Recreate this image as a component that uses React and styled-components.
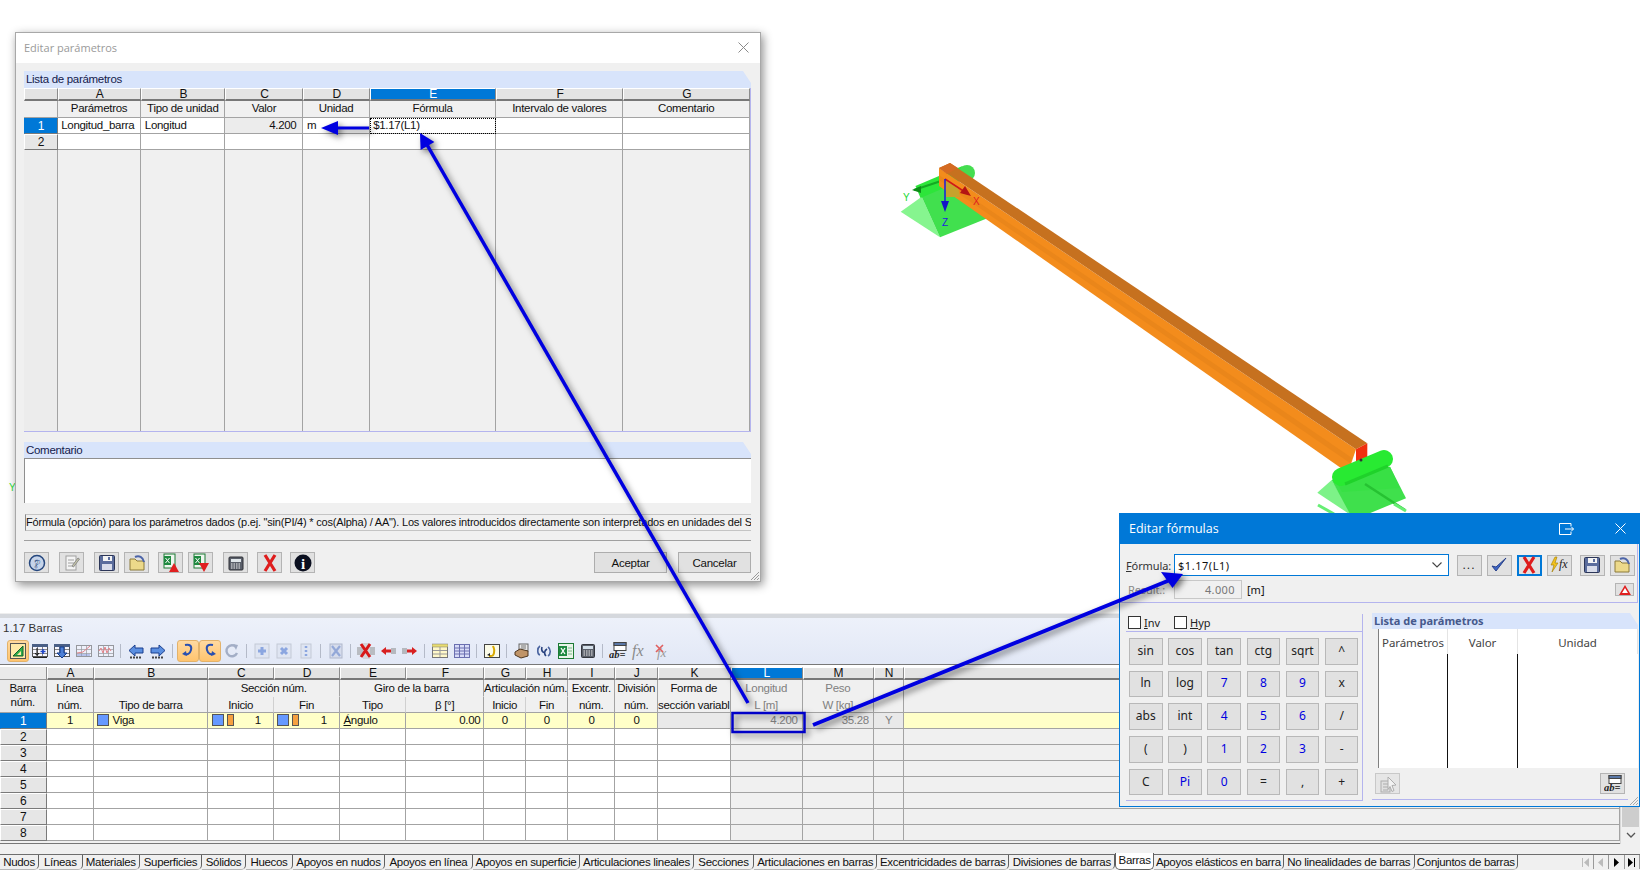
import React from 'react';
import styled, { createGlobalStyle } from 'styled-components';

const GlobalStyle = createGlobalStyle`
  html, body { margin: 0; padding: 0; background: #fff; }
  body { font: 11.5px "Liberation Sans", Arial, sans-serif; letter-spacing: -.3px; color: #111; }
  * { box-sizing: border-box; }
`;

const LINE = '#a3a3a3';
const LAV = '#b4b4ee';

const Page = styled.div`
  position: relative; width: 1640px; height: 870px; overflow: hidden;
  display: flex; flex-direction: column; background: #fff;
`;
const Viewport = styled.div`position: relative; height: 613px; flex: none; background: #fff;`;
const SceneSvg = styled.svg`position: absolute; inset: 0; width: 100%; height: 100%;`;

const Overlay = styled.svg`
  position: absolute; left: 0; top: 0; width: 1640px; height: 870px; pointer-events: none;
  filter: drop-shadow(3px 3px 3px rgba(0,0,0,.55));
`;

/* ---------- dialog 1 ---------- */
const ParamWindow = styled.section`
  position: absolute; left: 15px; top: 32px; width: 746px; height: 550px;
  background: #f0f0f0; border: 1px solid #a8a8a8; box-shadow: 2px 3px 9px rgba(0,0,0,.45);
  display: flex; flex-direction: column;
`;
const ParamTitle = styled.header`
  height: 30px; flex: none; background: #fff; display: flex; align-items: center; justify-content: space-between;
  padding: 0 11px 2px 8px; font: 11px "Open Sans", sans-serif; letter-spacing: 0; color: #9a9a9a;
`;
const ParamBody = styled.div`flex: 1; display: flex; flex-direction: column; padding: 8px 9px 0 8px; position: relative;`;
const GroupHead = styled.div`
  height: ${p => p.$h || 17}px; flex: none; margin-top: ${p => p.$mt || 0}px; background: #d8e4fb; color: #14204c; padding: 2px 0 0 2px; line-height: 13px;
  clip-path: polygon(0 0, calc(100% - 8px) 0, 100% 12px, 100% 100%, 0 100%);
`;
const ParamGrid = styled.div`
  height: 344px; flex: none; display: grid; background: #f0f0f0;
  grid-template-columns: 33.7px 83.6px 84.1px 78.1px 66.2px 126.8px 126.9px 1fr;
  grid-template-rows: 13px 17px 16px 16px 1fr;
  border-bottom: 1px solid ${LAV}; border-right: 1px solid ${LAV};
`;
const Letter = styled.div`
  display: flex; align-items: center; justify-content: center; line-height: 12px; font-size: 12px;
  background: ${p => p.$sel ? '#0078d7' : '#e3e3e3'}; color: ${p => p.$sel ? '#fff' : '#111'};
  border-top: 1px solid #fff; border-left: 1px solid #fff;
  border-right: 1px solid #8c8c8c; border-bottom: 2px solid #777;
`;
const ColHead = styled.div`
  display: flex; align-items: center; justify-content: center; border-right: 1px solid ${LINE}; border-bottom: 1px solid ${LINE};
  background: #f0f0f0; padding-bottom: 3px;
`;
const RowNum = styled.div`
  display: flex; align-items: center; justify-content: center; font-size: 12px; padding-bottom: 1px;
  background: ${p => p.$sel ? '#0078d7' : '#e6e6e6'}; color: ${p => p.$sel ? '#fff' : '#111'};
  border-top: 1px solid ${p => p.$sel ? '#0078d7' : '#fff'}; border-left: 1px solid ${p => p.$sel ? '#0078d7' : '#fff'};
  border-right: 1px solid #7a7a7a; border-bottom: 1px solid #7a7a7a;
`;
const Cell = styled.div`
  display: flex; align-items: center; gap: ${p => p.$gap || 0}px; white-space: nowrap; overflow: hidden;
  justify-content: ${p => p.$align === 'right' ? 'flex-end' : p.$align === 'center' ? 'center' : 'flex-start'};
  padding: 0 ${p => p.$pr || 3}px 1px 3.5px; background: ${p => p.$bg || '#fff'}; color: ${p => p.$muted ? '#808080' : '#111'};
  border-right: 1px solid ${LINE}; border-bottom: 1px solid ${LINE};
  ${p => p.$dotted ? 'outline: 1px dotted #000; outline-offset: -1px;' : ''}
`;
const Filler = styled.div`background: ${p => p.$dark ? '#ececec' : '#f0f0f0'}; border-right: 1px solid ${LINE};`;
const CommentBox = styled.div`
  height: 45px; flex: none; background: #fff; border-top: 1px solid #8f8f8f; border-left: 1px solid #8f8f8f;
`;
const StatusText = styled.div`
  height: 17px; flex: none; margin: 11px 0 0 1px; border: 1px solid #c4c4c4; border-left-color: #888; border-right: none;
  white-space: nowrap; overflow: hidden; font-size: 11px; letter-spacing: -.2px; line-height: 14px;
`;
const Rule = styled.div`height: 1px; flex: none; background: #a0a0a0; margin-top: 9px;`;
const DialogActions = styled.div`height: 21px; flex: none; margin-top: 11px; display: flex; align-items: center;`;
const IconBtn = styled.button`
  width: ${p => p.$w || 25}px; height: ${p => p.$h || 21}px; flex: none; margin: 0 0 0 ${p => p.$ml || 0}px; padding: 0;
  display: flex; align-items: center; justify-content: center;
  background: #e1e1e1; border: ${p => p.$focus ? '2px solid #0078d7' : '1px solid #b4b4b4'};
  opacity: ${p => p.$dim ? .65 : 1};
`;
const Ellipsis = styled.span`font: 12px "Liberation Sans", sans-serif; letter-spacing: 1px; color: #222;`;
const TextBtn = styled.button`
  width: 73px; height: 21px; margin-left: ${p => p.$ml || 0}px; padding: 0; background: #e1e1e1; border: 1px solid #adadad;
  font: 11.5px "Liberation Sans", sans-serif; letter-spacing: -.24px; color: #111;
`;
const Grip = styled.svg`position: absolute; right: 0; bottom: 0; width: 12px; height: 12px;`;

/* ---------- bottom panel ---------- */
const PanelSash = styled.div`height: 5px; flex: none; background: #d5d8dd; border-top: 1px solid #eee;`;
const PanelHead = styled.div`
  height: 47px; flex: none; background: linear-gradient(#edf1fa, #e2e8f6);
  border-bottom: 1px solid #787878; padding: 3px 0 0 3px;
`;
const PanelTitle = styled.div`font: 11.5px "Liberation Sans", sans-serif; color: #333; line-height: 15px; letter-spacing: 0;`;
const Toolbar = styled.div`display: flex; align-items: center; height: 24px; margin: 3px 0 0 3.5px;`;
const ToolBtn = styled.div`
  width: 22px; height: 22px; flex: none; display: flex; align-items: center; justify-content: center;
  ${p => p.$active ? 'background: linear-gradient(#ffd9a0, #ffc46e); border: 1px solid #e3b26a; border-radius: 3px;' : ''}
`;
const ToolSep = styled.div`
  width: 8px; height: 18px; flex: none; position: relative;
  &::after { content: ''; position: absolute; left: 3px; top: 2px; bottom: 2px; width: 1px; background: #b4bac8; }
`;
const TableArea = styled.div`height: 177px; flex: none; margin-top: 2px; display: flex; background: #f0f0f0;`;
const BarsGrid = styled.div`
  flex: 1; display: grid;
  grid-template-columns: 46.6px 47.4px 114.4px 65.6px 66px 66px 78.4px 41.6px 42px 47.5px 42.5px 72.7px 72px 71.3px 30px 1fr;
  grid-template-rows: 13px 16.5px 16.5px repeat(8, 16px);
  border-bottom: 1px solid #777;
`;
const Corner = styled.div`background: #eaeaea; border-right: 1px solid #8c8c8c; border-bottom: 1px solid #999;`;
const Head = styled.div`
  grid-column: ${p => p.$c} / span ${p => p.$cs || 1}; grid-row: ${p => p.$r} / span ${p => p.$rs || 1};
  display: flex; flex-direction: column; align-items: center; justify-content: flex-start; white-space: nowrap; overflow: hidden;
  padding-top: 1px;
  background: ${p => p.$dark ? '#eaeaea' : '#f0f0f0'}; color: ${p => p.$muted ? '#808080' : '#111'};
  border-right: 1px solid ${p => p.$soft ? '#d0d0d0' : LINE}; border-bottom: 1px solid ${p => p.$open ? 'transparent' : LINE};
`;
const HeadLine = styled.div`height: ${p => p.$tight ? 14 : 16.5}px; line-height: 14px; flex: none;`;
const Swatch = styled.span`
  flex: none; width: ${p => p.$w || 12}px; height: 12px; background: ${p => p.$c}; border: 1px solid #555;
`;
const SpacedValue = styled.span`margin-left: auto; padding-right: ${p => p.$pr || 0}px;`;
const Underlined = styled.u`text-decoration: underline;`;
const ScrollTrack = styled.div`
  width: 20px; flex: none; background: #f0f0f0; display: flex; flex-direction: column; justify-content: flex-end; border-left: 1px solid #d8d8d8;
`;
const ScrollThumb = styled.div`height: 40px; background: #cdcdcd; margin: 0 1px;`;
const ScrollBtn = styled.div`height: 17px; display: flex; align-items: center; justify-content: center;`;
const TabGap = styled.div`height: 10px; flex: none; background: #f0f0f0;`;
const TabStrip = styled.div`
  height: 18px; flex: none; display: flex; background: #f0f0f0; border-top: 1px solid #6e6e6e; position: relative;
`;
const Tab = styled.div`
  width: ${p => p.$w}px; flex: none; text-align: center; line-height: 15px; white-space: nowrap;
  margin-top: ${p => p.$active ? -2 : 0}px; height: ${p => p.$active ? 17 : 15}px;
  background: ${p => p.$active ? '#fff' : 'transparent'};
  border-right: 1px solid #606060; border-bottom: 1px solid ${p => p.$active ? '#606060' : '#b8b8b8'}; border-bottom-right-radius: 5px;
  ${p => p.$active ? 'border-left: 1px solid #606060; border-bottom-left-radius: 5px;' : ''}
`;
const TabNav = styled.div`margin-left: auto; display: flex; align-items: center; padding: 0 0 3px 0;`;
const NavBtn = styled.div`
  width: 15.5px; height: 14px; display: flex; align-items: center; justify-content: center;
  border-right: 1px solid #9a9a9a;
`;

/* ---------- formula dialog ---------- */
const FormulaWindow = styled.section`
  position: absolute; left: 1119px; top: 513px; width: 521px; height: 294px;
  background: #f0f0f0; border: 1px solid #0078d7; border-top: none; display: flex; flex-direction: column;
`;
const FormulaTitle = styled.header`
  height: 31px; flex: none; background: #0078d7; color: #fff; display: flex; align-items: center;
  font: 12.5px "Open Sans", sans-serif; letter-spacing: 0; padding: 0 5px 0 9px;
`;
const TitleGlyph = styled.span`margin-left: ${p => p.$ml}px; display: flex;`;
const FormulaTop = styled.div`
  height: 59px; flex: none; padding: 10px 0 0 6px; margin-right: 1px;
  border-right: 1px solid ${LAV}; border-bottom: 1px solid ${LAV};
`;
const FormRow = styled.div`display: flex; align-items: center; height: ${p => p.$h}px; margin-top: ${p => p.$mt || 0}px;`;
const FieldLabel = styled.label`
  width: 48px; flex: none; font: 11px "Noto Sans", sans-serif; letter-spacing: -.1px; color: ${p => p.$muted ? '#8a8a8a' : '#333'}; padding-left: ${p => p.$pl || 0}px;
`;
const Combo = styled.div`
  width: 275px; height: 22px; flex: none; background: #fff; border: 1px solid #0078d7; display: flex; align-items: center;
  justify-content: space-between; padding: 0 5px 0 3px; font: 11px "Noto Sans", sans-serif; letter-spacing: .55px;
`;
const ReadOnly = styled.div`
  width: 68px; height: 19px; flex: none; background: #f0f0f0; border: 1px solid #c8c8c8; text-align: right; padding-right: 6px;
  color: #777; font: 11px/17px "Noto Sans", sans-serif; letter-spacing: .4px;
`;
const Unit = styled.span`margin-left: 5px; width: 20px; flex: none; font: 11px "Noto Sans", sans-serif; letter-spacing: 0;`;
const FormulaLower = styled.div`flex: 1; display: flex; position: relative;`;
const CalcColumn = styled.div`width: 243px; flex: none; padding-left: 6px;`;
const CalcInner = styled.div`
  margin-top: 11px; height: 187px; border-right: 1px solid ${LAV}; border-bottom: 1px solid ${LAV};
`;
const ToggleRow = styled.div`
  height: 18px; display: flex; align-items: center; padding-left: 2px; border-bottom: 1px solid ${LAV};
  font: 11px "Noto Sans", sans-serif; letter-spacing: 0; color: #222;
`;
const Toggle = styled.span`display: flex; align-items: center; gap: 3px; width: 46px;`;
const CheckSquare = styled.span`width: 13px; height: 13px; background: #fff; border: 1px solid #333;`;
const CalcGrid = styled.div`
  display: grid; grid-template-columns: repeat(6, 33.5px); column-gap: 5.7px;
  grid-auto-rows: 26.5px; row-gap: 6.2px; margin: 6px 0 0 3px;
`;
const CalcKey = styled.button`
  padding: 0 0 2px; background: #e1e1e1; border: 1px solid #b8b8b8; font: 12px "Noto Sans", sans-serif;
  color: ${p => p.$blue ? '#0000e0' : '#222'};
`;
const ListColumn = styled.div`flex: 1; display: flex; flex-direction: column; padding: 10px 1px 0 9px; min-width: 0;`;
const ListHead = styled(GroupHead)`
  color: #46598c; font: 700 11px "Noto Sans", sans-serif; letter-spacing: 0; padding: 0 0 0 2px; line-height: 15px;
`;
const ListTable = styled.div`
  height: 139px; flex: none; margin-left: 6px; background: #fff; border-left: 1px solid #808080;
  display: grid; grid-template-columns: 69px 70px 1fr; grid-template-rows: 25px 1fr;
`;
const ListHeadCell = styled.div`
  display: flex; justify-content: center; padding-top: 6px; border-right: 1px solid #e4e4e4; font: 11.5px "Noto Sans", sans-serif; letter-spacing: -.1px; color: #444;
`;
const ListCol = styled.div`border-right: ${p => p.$end ? 'none' : '1px solid #111'};`;
const ListFoot = styled.div`
  height: 32px; flex: none; padding: 5px 3px 0 3px; display: flex; justify-content: space-between; margin-right: 10px;
  border-bottom: 1px solid ${LAV};
`;

/* ---------- icons ---------- */
const Svg = ({ s = 16, h, children }) => <svg width={s} height={h || s} viewBox={`0 0 ${s} ${h || s}`}>{children}</svg>;
const TableBase = ({ y = 2, fill = '#f6f6ff', line = '#555' }) => (
  <g fill="none" stroke={line}>
    <rect x=".5" y={y + .5} width="15" height={13 - y} fill={fill} />
    <path d={`M.5 ${y + 4.5}h15M.5 ${y + 8.5}h15M5.5 ${y}v11M10.5 ${y}v11`} strokeOpacity=".7" />
  </g>
);
const I = {
  ruler: <Svg><rect x=".5" y=".5" width="15" height="15" fill="#ffe9a8" stroke="#555" /><path d="M3 13L13 3v10z" fill="#2fae4a" stroke="#14602a" /><path d="M7 12l4-4v4z" fill="#ffe9a8" /></Svg>,
  tblPlus: <Svg><TableBase /><rect x="0" y="1" width="16" height="3" fill="#4a5f86" /><path d="M5 5v7M3 10l2 2.5L7 10" stroke="#111" fill="none" /><path d="M11 6v5M8.500 8.500h5" stroke="#1f45c8" strokeWidth="1.6" /><path d="M1 14.500h14" stroke="#222" /></Svg>,
  tblDown: <Svg><TableBase /><rect x="0" y="1" width="16" height="3" fill="#4a5f86" /><path d="M6 4h4v6h3l-5 5-5-5h3z" fill="#4d7fd6" stroke="#123a8a" /></Svg>,
  chart1: <Svg><g opacity=".55"><TableBase /><path d="M1 10l6-1 7-6" stroke="#e03030" fill="none" /><path d="M1 12h13" stroke="#3050c0" /></g></Svg>,
  chart2: <Svg><g opacity=".55"><TableBase /><path d="M1 8l2-3 2 5 2-6 2 6 2-5 2 3" stroke="#e03030" fill="none" /></g></Svg>,
  arrL: <Svg><path d="M7 2v3h8v5H7v3L1 7.500z" fill="#5b8fe0" stroke="#1b3f8f" /><path d="M2 14.500h12" stroke="#444" strokeDasharray="2 1" strokeWidth="2" /></Svg>,
  arrR: <Svg><path d="M9 2v3H1v5h8v3l6-5.500z" fill="#5b8fe0" stroke="#1b3f8f" /><path d="M2 14.500h12" stroke="#444" strokeDasharray="2 1" strokeWidth="2" /></Svg>,
  hookL: <Svg><path d="M5 2c5-1 7 1 6 5s-4 5-7 4" fill="none" stroke="#284fb0" strokeWidth="2" /><path d="M6 8l-4 3 5 2z" fill="#284fb0" /></Svg>,
  hookR: <Svg><path d="M11 2C6 1 4 3 5 7s4 5 7 4" fill="none" stroke="#284fb0" strokeWidth="2" /><path d="M10 8l4 3-5 2z" fill="#284fb0" /></Svg>,
  cycle: <Svg><path d="M12 4a5.500 5.500 0 1 0 1 6" fill="none" stroke="#a3aec6" strokeWidth="2.400" /><path d="M9 1l5 1-2 5z" fill="#a3aec6" /></Svg>,
  nodePlus: <Svg><rect x="1" y="1" width="14" height="14" fill="#dfe5f2" stroke="#c3c9d6" /><path d="M8 4v8M4 8h8" stroke="#8ba6e0" strokeWidth="3" /></Svg>,
  nodeX: <Svg><rect x="1" y="1" width="14" height="14" fill="#dfe5f2" stroke="#c3c9d6" /><path d="M5 5l6 6M11 5l-6 6" stroke="#8ba6e0" strokeWidth="3" /></Svg>,
  nodeDots: <Svg><rect x="3" y="1" width="10" height="14" fill="#dfe5f2" stroke="#c3c9d6" /><path d="M8 3v2M8 7v2M8 11v2" stroke="#8ba6e0" strokeWidth="2.500" /></Svg>,
  sheetX: <Svg><rect x="2" y="1" width="12" height="14" fill="#d6dcec" stroke="#b0b8cc" /><path d="M4 3l8 10M12 3L4 13" stroke="#93a8d8" strokeWidth="2.200" /></Svg>,
  delRed: <Svg s={18} h={16}><rect x="0" y="4" width="18" height="8" fill="#b9bcc2" /><rect x="6" y="0" width="7" height="16" fill="#d4d6da" /><path d="M4 1l9 13M13 1L4 14" stroke="#d81818" strokeWidth="3" /></Svg>,
  insL: <Svg><path d="M1 8l5-4v2.500h5v3H6V12z" fill="#d82020" /><rect x="11" y="5" width="5" height="6" fill="#b5b8be" /></Svg>,
  insR: <Svg><rect x="0" y="5" width="5" height="6" fill="#b5b8be" /><path d="M15 8l-5-4v2.500H5v3h5V12z" fill="#d82020" /></Svg>,
  tblY: <Svg><rect x=".5" y="1.500" width="15" height="13" fill="#fff8c8" stroke="#777" /><rect x="0" y="1" width="16" height="3" fill="#e8dc70" stroke="#777" strokeWidth=".5" /><path d="M1 7.500h14M1 11h14M8 4v10" stroke="#999" /></Svg>,
  tblB: <Svg><rect x=".5" y="1.500" width="15" height="13" fill="#d8dcf8" stroke="#6a6fb0" /><path d="M1 5h14M1 8h14M1 11h14M5.500 2v12M10.500 2v12" stroke="#6a6fb0" /></Svg>,
  tblNote: <Svg><rect x=".5" y="1.500" width="15" height="13" fill="#fbfbe8" stroke="#444" /><path d="M9 3c1 3 2 3 1 7s-3 3-5 3" stroke="#d8a800" strokeWidth="2" fill="none" /><path d="M3 12l3-2v3z" fill="#222" /></Svg>,
  hand: <Svg><rect x="5" y="1" width="9" height="7" fill="#e8e8e8" stroke="#666" /><path d="M1 9l5-3 8 2v5l-7 2-6-3z" fill="#c09468" stroke="#4e3720" /><path d="M7 3h5M7 5h5" stroke="#777" /></Svg>,
  link: <Svg><path d="M4 3C1 5 1 11 4 12M12 4c3 2 3 7 0 9" fill="none" stroke="#4a64a0" strokeWidth="1.600" /><path d="M6 4c-1 3 0 5 3 6M11 6c-3 2-3 5-1 7" fill="none" stroke="#27417e" strokeWidth="1.600" /></Svg>,
  excel: <Svg><rect x=".5" y=".5" width="15" height="15" fill="#e9f4e9" stroke="#1d7a35" /><rect x="1" y="3" width="8" height="10" fill="#1f8a40" /><path d="M3 5l4 6M7 5l-4 6" stroke="#fff" strokeWidth="1.300" /><path d="M10 5h4M10 8h4M10 11h4" stroke="#7ab88a" /></Svg>,
  calc: <Svg><rect x="1.500" y="1.500" width="13" height="13" rx="1" fill="#5a5f6a" stroke="#33363d" /><rect x="3" y="3" width="10" height="3" fill="#d4e0ea" /><path d="M3.500 8h9M3.500 10h9M3.500 12h9" stroke="#e8e8e8" strokeDasharray="1.500 1" /></Svg>,
  abEq: <Svg s={18} h={18}><rect x="5" y=".5" width="12" height="8" fill="#fff" stroke="#444" /><rect x="5" y=".5" width="12" height="3" fill="#5a78a8" stroke="#444" /><text x="0" y="16" fontFamily="Liberation Serif" fontStyle="italic" fontWeight="700" fontSize="10.500" fill="#222" letterSpacing="0">ab=</text></Svg>,
  fx: <Svg s={18} h={18}><text x="1" y="14" fontFamily="Liberation Serif" fontStyle="italic" fontSize="16" fill="#8a8a8a" letterSpacing="0">fx</text></Svg>,
  fxOff: <Svg s={18} h={18}><text x="4" y="15" fontFamily="Liberation Serif" fontStyle="italic" fontSize="13" fill="#9a9a9a" letterSpacing="0">fx</text><path d="M3 3l7 7M10 3l-7 7" stroke="#e06060" strokeWidth="1.600" /></Svg>,
  help: <Svg s={18} h={18}><circle cx="9" cy="9" r="7.500" fill="#c6d4ea" stroke="#25477e" strokeWidth="1.500" /><text x="9" y="13.500" textAnchor="middle" fontFamily="Liberation Serif" fontStyle="italic" fontWeight="700" fontSize="13" fill="#fff" stroke="#25477e" strokeWidth=".5">?</text></Svg>,
  note: <Svg s={18} h={18}><rect x="3" y="2" width="10" height="14" fill="#f4f4f4" stroke="#a0a0a0" /><path d="M5 6h6M5 9h6M5 12h4" stroke="#a0a0a0" /><path d="M9 12l6-8 1.500 1-6 8z" fill="#c8c8a8" stroke="#8c8c8c" /></Svg>,
  save: <Svg s={18} h={18}><rect x="1.500" y="1.500" width="15" height="15" rx="1" fill="#5a6c9c" stroke="#2c3658" /><rect x="5" y="2" width="9" height="5" fill="#f4f4f4" /><rect x="10" y="3" width="2" height="3" fill="#5a6c9c" /><rect x="4" y="10" width="10" height="6" fill="#d8dcea" /></Svg>,
  open: <Svg s={18} h={18}><path d="M2 5h5l2 2h7v9H2z" fill="#ecd98a" stroke="#8c7a3a" /><path d="M7 3c4-2 8 0 9 5" fill="none" stroke="#4c64a8" strokeWidth="2" /></Svg>,
  xlUp: <Svg s={18} h={20}><rect x="2" y="1" width="11" height="14" fill="#eef6ee" stroke="#1d7a35" /><rect x="2" y="3" width="7" height="9" fill="#1f8a40" /><path d="M3.500 5l4 5M7.500 5l-4 5" stroke="#fff" /><path d="M12 10l5 9H7z" fill="#e02020" /></Svg>,
  xlDown: <Svg s={18} h={20}><rect x="2" y="1" width="11" height="14" fill="#eef6ee" stroke="#1d7a35" /><rect x="2" y="3" width="7" height="9" fill="#1f8a40" /><path d="M3.500 5l4 5M7.500 5l-4 5" stroke="#fff" /><path d="M12 19l5-9H7z" fill="#e02020" /></Svg>,
  calcBig: <Svg s={18} h={18}><rect x="2" y="3" width="14" height="13" rx="1" fill="#5a5f6a" stroke="#2e3036" /><rect x="4" y="5" width="10" height="3" fill="#e0e6ea" /><path d="M4 10h10M4 12h10M4 14h10" stroke="#eee" strokeDasharray="1.500 1" /></Svg>,
  redX: <Svg s={18} h={20}><path d="M4 2l10 16M14 2L4 18" stroke="#de1c1c" strokeWidth="3.200" /></Svg>,
  info: <Svg s={18} h={18}><circle cx="9" cy="9" r="8.500" fill="#0b1020" /><text x="9" y="14.500" textAnchor="middle" fontFamily="Liberation Serif" fontWeight="700" fontSize="15" fill="#fff">i</text></Svg>,
  check: <Svg s={20} h={18}><path d="M3 10l4 5L17 2 7 11z" fill="#3f66c8" stroke="#28418a" strokeWidth="1" /></Svg>,
  fxBolt: <Svg s={20} h={18}><path d="M6 1L2 9h3l-2 7 6-9H6l2-6z" fill="#f2c21e" stroke="#a07a00" strokeWidth=".6" /><text x="10" y="12" fontFamily="Liberation Serif" fontStyle="italic" fontSize="12" fill="#222" letterSpacing="0">fx</text></Svg>,
  warn: <Svg s={12} h={10}><path d="M6 0l6 10H0z" fill="#e02020" /><path d="M6 3l3 5H3z" fill="#fff" /></Svg>,
  listPick: <Svg s={20} h={20}><rect x="3" y="7" width="9" height="11" fill="#d8d8d8" stroke="#8a8a8a" /><path d="M5 10h5M5 13h5M5 16h5" stroke="#8a8a8a" /><path d="M10 3l8 8-4 .5 2 5-2 1-2-5-2 3z" fill="#f4f4f4" stroke="#8a8a8a" /></Svg>,
  chevron: <svg width="12" height="8" viewBox="0 0 12 8"><path d="M1.500 1.500L6 6l4.500-4.500" fill="none" stroke="#444" strokeWidth="1.100" /></svg>,
  popOut: <svg width="15" height="12" viewBox="0 0 15 12"><path d="M12 .5H.5v11H12M12 .5v2.500M12 11.500V9M6 6h8.500M12 3.500L14.500 6 12 8.500" fill="none" stroke="#fff" /></svg>,
  closeW: <svg width="11" height="11" viewBox="0 0 11 11"><path d="M.5.5l10 10M10.500.5l-10 10" stroke="#fff" /></svg>,
  closeG: <svg width="11" height="11" viewBox="0 0 11 11"><path d="M.5.5l10 10M10.500.5l-10 10" stroke="#8a8a8a" /></svg>,
  first: <svg width="9" height="9" viewBox="0 0 9 9"><path d="M1.500 0v9" stroke="#bbb" /><path d="M8 0v9L3 4.500z" fill="#bbb" /></svg>,
  prev: <svg width="9" height="9" viewBox="0 0 9 9"><path d="M7 0v9L2 4.500z" fill="#bbb" /></svg>,
  next: <svg width="9" height="9" viewBox="0 0 9 9"><path d="M2 0v9l5-4.500z" fill="#000" /></svg>,
  last: <svg width="9" height="9" viewBox="0 0 9 9"><path d="M1 0v9l5-4.500z" fill="#000" /><path d="M7.500 0v9" stroke="#000" /></svg>,
};

const Scene = () => (
  <SceneSvg viewBox="0 0 1640 613">
    {/* left support */}
    <polygon points="900.700,211.700 921.700,196.700 940,237.300" fill="#86f58f" />
    <polygon points="921.700,196.700 943,180 988,218 940,237.300" fill="#41e04e" />
    <line x1="918" y1="192" x2="965" y2="172" stroke="#2de53a" strokeWidth="13" />
    <circle cx="967" cy="173" r="8" fill="#45dd50" />
    <line x1="914" y1="190" x2="944" y2="180" stroke="#15a822" strokeWidth="2" />
    <polygon points="912,190 921,186 921,193" fill="#0e8c18" />
    {/* beam */}
    <polygon points="939,168 1356,449.300 1348,473 939,186" fill="#f38c1c" />
    <polygon points="939,175 1352,458 1350,463 939,180" fill="#ea861a" />
    <polygon points="939,168 950,163 1367.300,443.300 1356,449.300" fill="#c6711f" />
    <polygon points="939,168 950,163 958,168 947,174" fill="#d46a22" />
    <polygon points="945,180 958,187 960,197 946,197" fill="#c6a22c" />
    <polygon points="1356,449.300 1367.300,443.300 1367.300,462 1356,466" fill="#f2300f" />
    {/* local axes */}
    <line x1="945" y1="179" x2="968" y2="194" stroke="#d01818" strokeWidth="1.500" />
    <polygon points="971,196 960,193 965,186" fill="#b41414" />
    <line x1="945" y1="179" x2="945" y2="203" stroke="#1a1ae0" strokeWidth="1.500" />
    <polygon points="945,212 941,201 949,201" fill="#1414c8" />
    <text x="903" y="201" fontFamily="Liberation Sans" fontSize="10" fill="#20d830">Y</text>
    <text x="973" y="205" fontFamily="Liberation Sans" fontSize="10" fill="#e02020">X</text>
    <text x="942" y="226" fontFamily="Liberation Sans" fontSize="10" fill="#2020e0">Z</text>
    <text x="9" y="491" fontFamily="Liberation Sans" fontSize="10" fill="#30e040">Y</text>
    {/* right support */}
    <polygon points="1317.300,492.700 1331.700,480 1353.300,516.700" fill="#7df288" />
    <polygon points="1331.700,480 1390,466.700 1406,498.300 1353.300,520" fill="#3fe04c" />
    <polygon points="1335,479 1390,466.700 1400,488 1342,492" fill="#38e045" />
    <line x1="1341" y1="477" x2="1384" y2="459" stroke="#28ea32" strokeWidth="18" strokeLinecap="round" />
    <line x1="1345" y1="484" x2="1388" y2="466" stroke="#1fd22a" strokeWidth="3" />
    <line x1="1365" y1="484" x2="1405" y2="510" stroke="#26c232" strokeWidth="2.500" />
    <line x1="1318" y1="505" x2="1334" y2="514" stroke="#67ee74" strokeWidth="3" />
    <line x1="1394" y1="504" x2="1406" y2="511" stroke="#67ee74" strokeWidth="3" />
    <circle cx="1361" cy="460" r="1.500" fill="#333" />
  </SceneSvg>
);

const paramLetters = ['A', 'B', 'C', 'D', 'E', 'F', 'G'];
const paramHeads = ['Parámetros', 'Tipo de unidad', 'Valor', 'Unidad', 'Fórmula', 'Intervalo de valores', 'Comentario'];
const actions = [['help', 0], ['note', 10, true], ['save', 10], ['open', 5], ['xlUp', 9], ['xlDown', 5], ['calcBig', 10], ['redX', 9], ['info', 8]];

const ParamDialog = () => (
  <ParamWindow>
    <ParamTitle>Editar parámetros {I.closeG}</ParamTitle>
    <ParamBody>
      <GroupHead>Lista de parámetros</GroupHead>
      <ParamGrid>
        <Letter />
        {paramLetters.map(l => <Letter key={l} $sel={l === 'E'}>{l}</Letter>)}
        <ColHead />
        {paramHeads.map(h => <ColHead key={h}>{h}</ColHead>)}
        <RowNum $sel>1</RowNum>
        <Cell>Longitud_barra</Cell>
        <Cell>Longitud</Cell>
        <Cell $align="right" $bg="#ececec" $pr={6}>4.200</Cell>
        <Cell>m</Cell>
        <Cell $dotted>$1.17(L1)</Cell>
        <Cell /><Cell />
        <RowNum>2</RowNum>
        {paramLetters.map(l => <Cell key={l} />)}
        <Filler $dark />
        {paramLetters.map(l => <Filler key={l} />)}
      </ParamGrid>
      <GroupHead $h={16} $mt={10}>Comentario</GroupHead>
      <CommentBox />
      <StatusText>Fórmula (opción) para los parámetros dados (p.ej. "sin(PI/4) * cos(Alpha) / AA"). Los valores introducidos directamente son interpretados en unidades del S</StatusText>
      <Rule />
      <DialogActions>
        {actions.map(([k, ml, dim]) => <IconBtn key={k} $ml={ml}>{I[k]}</IconBtn>)}
        <TextBtn $ml={279}>Aceptar</TextBtn>
        <TextBtn $ml={11}>Cancelar</TextBtn>
      </DialogActions>
      <Grip viewBox="0 0 12 12"><path d="M11 3L3 11M11 6l-5 5M11 9l-2 2" stroke="#999" /></Grip>
    </ParamBody>
  </ParamWindow>
);

const tools = [
  ['ruler', 1], ['tblPlus'], ['tblDown'], ['chart1'], ['chart2'], 0,
  ['arrL'], ['arrR'], 0,
  ['hookL', 1], ['hookR', 1], ['cycle'], 0,
  ['nodePlus'], ['nodeX'], ['nodeDots'], 0,
  ['sheetX'], 0,
  ['delRed'], ['insL'], ['insR'], 0,
  ['tblY'], ['tblB'], 0,
  ['tblNote'], 0,
  ['hand'], ['link'], ['excel'], ['calc'], 0,
  ['abEq'], ['fx'], ['fxOff'],
];

const barLetters = 'ABCDEFGHIJKLMN'.split('');
const heads = [
  { c: 1, r: 2, rs: 2, dark: 1, tight: 1, l: ['Barra', 'núm.'] },
  { c: 2, r: 2, rs: 2, l: ['Línea', 'núm.'] },
  { c: 3, r: 2, rs: 2, l: ['', 'Tipo de barra'] },
  { c: 4, cs: 2, r: 2, open: 1, l: ['Sección núm.'] },
  { c: 4, r: 3, soft: 1, l: ['Inicio'] },
  { c: 5, r: 3, l: ['Fin'] },
  { c: 6, cs: 2, r: 2, open: 1, l: ['Giro de la barra'] },
  { c: 6, r: 3, soft: 1, l: ['Tipo'] },
  { c: 7, r: 3, l: ['β [°]'] },
  { c: 8, cs: 2, r: 2, open: 1, l: ['Articulación núm.'] },
  { c: 8, r: 3, soft: 1, l: ['Inicio'] },
  { c: 9, r: 3, l: ['Fin'] },
  { c: 10, r: 2, rs: 2, l: ['Excentr.', 'núm.'] },
  { c: 11, r: 2, rs: 2, l: ['División', 'núm.'] },
  { c: 12, r: 2, rs: 2, l: ['Forma de', 'sección variabl'] },
  { c: 13, r: 2, rs: 2, muted: 1, l: ['Longitud', 'L [m]'] },
  { c: 14, r: 2, rs: 2, muted: 1, l: ['Peso', 'W [kg]'] },
  { c: 15, r: 2, rs: 2, l: [] },
  { c: 16, r: 2, rs: 2, l: [] },
];
const Y = '#ffffc8';
const G = '#e9e9e9';
const tabs = [
  ['Nudos', 39], ['Líneas', 43.6], ['Materiales', 57.4], ['Superficies', 62], ['Sólidos', 44], ['Huecos', 47],
  ['Apoyos en nudos', 92], ['Apoyos en línea', 88], ['Apoyos en superficie', 107], ['Articulaciones lineales', 114],
  ['Secciones', 60], ['Articulaciones en barras', 123.5], ['Excentricidades de barras', 131.5], ['Divisiones de barras', 106.5],
  ['Barras', 38.2], ['Apoyos elásticos en barra', 130.3], ['No linealidades de barras', 130.6], ['Conjuntos de barras', 103.4],
];

const BarsTable = () => (
  <TableArea>
    <BarsGrid>
      <Corner />
      {barLetters.map(l => <Letter key={l} $sel={l === 'L'}>{l}</Letter>)}
      <Letter />
      {heads.map((h, i) => (
        <Head key={i} $c={h.c} $cs={h.cs} $r={h.r} $rs={h.rs} $dark={h.dark} $muted={h.muted} $open={h.open} $soft={h.soft}>
          {h.l.map((t, j) => <HeadLine key={j} $tight={h.tight}>{t}</HeadLine>)}
        </Head>
      ))}
      <RowNum $sel>1</RowNum>
      <Cell $bg={Y} $align="center">1</Cell>
      <Cell $bg={Y} $gap={3}><Swatch $c="#6699ff" />Viga</Cell>
      <Cell $bg={Y} $gap={3}><Swatch $c="#6699ff" /><Swatch $c="#f5a040" $w={7} /><SpacedValue $pr={9}>1</SpacedValue></Cell>
      <Cell $bg={Y} $gap={3}><Swatch $c="#6699ff" /><Swatch $c="#f5a040" $w={7} /><SpacedValue $pr={9}>1</SpacedValue></Cell>
      <Cell $bg={Y}><Underlined>Á</Underlined>ngulo</Cell>
      <Cell $bg={Y} $align="right">0.00</Cell>
      <Cell $bg={Y} $align="center">0</Cell>
      <Cell $bg={Y} $align="center">0</Cell>
      <Cell $bg={Y} $align="center">0</Cell>
      <Cell $bg={Y} $align="center">0</Cell>
      <Cell $bg={G} />
      <Cell $bg={G} $muted $align="right" $pr={4}>4.200</Cell>
      <Cell $bg={G} $muted $align="right" $pr={4}>35.28</Cell>
      <Cell $bg={G} $muted $align="center">Y</Cell>
      <Cell $bg={Y} />
      {[2, 3, 4, 5, 6, 7, 8].map(n => (
        <React.Fragment key={n}>
          <RowNum>{n}</RowNum>
          {barLetters.map((l, i) => <Cell key={l} $bg={i >= 11 ? '#f0f0f0' : '#fff'} />)}
          <Cell $bg="#f0f0f0" />
        </React.Fragment>
      ))}
    </BarsGrid>
    <ScrollTrack>
      <ScrollThumb />
      <ScrollBtn><svg width="10" height="7" viewBox="0 0 10 7"><path d="M1 1l4 4 4-4" fill="none" stroke="#555" strokeWidth="1.300" /></svg></ScrollBtn>
    </ScrollTrack>
  </TableArea>
);

const keys = ['sin', 'cos', 'tan', 'ctg', 'sqrt', '^', 'ln', 'log', '7', '8', '9', 'x', 'abs', 'int', '4', '5', '6', '/', '(', ')', '1', '2', '3', '-', 'C', 'Pi', '0', '=', ',', '+'];
const isBlue = k => /^[0-9]$/.test(k) || k === 'Pi';

const FormulaDialog = () => (
  <FormulaWindow>
    <FormulaTitle>
      Editar fórmulas
      <TitleGlyph $ml={340}>{I.popOut}</TitleGlyph>
      <TitleGlyph $ml={41}>{I.closeW}</TitleGlyph>
    </FormulaTitle>
    <FormulaTop>
      <FormRow $h={22}>
        <FieldLabel><Underlined>F</Underlined>órmula:</FieldLabel>
        <Combo>$1.17(L1){I.chevron}</Combo>
        <IconBtn $ml={7.500}><Ellipsis>...</Ellipsis></IconBtn>
        <IconBtn $ml={5}>{I.check}</IconBtn>
        <IconBtn $ml={5} $focus>{I.redX}</IconBtn>
        <IconBtn $ml={5}>{I.fxBolt}</IconBtn>
        <IconBtn $ml={8}>{I.save}</IconBtn>
        <IconBtn $ml={5}>{I.open}</IconBtn>
      </FormRow>
      <FormRow $h={19} $mt={4}>
        <FieldLabel $muted $pl={2}>Result.:</FieldLabel>
        <ReadOnly>4.000</ReadOnly>
        <Unit>[m]</Unit>
        <IconBtn $ml={348} $w={19} $h={13}>{I.warn}</IconBtn>
      </FormRow>
    </FormulaTop>
    <FormulaLower>
      <CalcColumn>
        <CalcInner>
          <ToggleRow>
            <Toggle><CheckSquare /><span><Underlined>I</Underlined>nv</span></Toggle>
            <Toggle><CheckSquare /><span><Underlined>H</Underlined>yp</span></Toggle>
          </ToggleRow>
          <CalcGrid>
            {keys.map(k => <CalcKey key={k} $blue={isBlue(k)}>{k}</CalcKey>)}
          </CalcGrid>
        </CalcInner>
      </CalcColumn>
      <ListColumn>
        <ListHead $h={16}>Lista de parámetros</ListHead>
        <ListTable>
          <ListHeadCell>Parámetros</ListHeadCell>
          <ListHeadCell>Valor</ListHeadCell>
          <ListHeadCell>Unidad</ListHeadCell>
          <ListCol /><ListCol /><ListCol $end />
        </ListTable>
        <ListFoot>
          <IconBtn $dim>{I.listPick}</IconBtn>
          <IconBtn>{I.abEq}</IconBtn>
        </ListFoot>
      </ListColumn>
      <Grip viewBox="0 0 12 12"><path d="M11 3L3 11M11 6l-5 5M11 9l-2 2" stroke="#aaa" /></Grip>
    </FormulaLower>
  </FormulaWindow>
);

const Annotations = () => (
  <Overlay viewBox="0 0 1640 870">
    <g fill="#0000e0" stroke="none">
      <line x1="369" y1="128" x2="336" y2="128" stroke="#0000e0" strokeWidth="3" />
      <polygon points="321,128 338,121 338,135" />
      <line x1="748" y1="703" x2="426" y2="143" stroke="#0000e0" strokeWidth="3.500" />
      <polygon points="420,133 434.400,142 420.600,150" />
      <line x1="813" y1="725" x2="1170" y2="580" stroke="#0000e0" strokeWidth="4" />
      <polygon points="1183,574 1161,572 1172.500,588" />
      <rect x="732.500" y="713" width="72" height="19" fill="none" stroke="#0000c8" strokeWidth="2.500" />
    </g>
  </Overlay>
);

export default function App() {
  return (
    <Page>
      <GlobalStyle />
      <Viewport><Scene /></Viewport>
      <PanelSash />
      <PanelHead>
        <PanelTitle>1.17 Barras</PanelTitle>
        <Toolbar>
          {tools.map((t, i) => t ? <ToolBtn key={i} $active={t[1]}>{I[t[0]]}</ToolBtn> : <ToolSep key={i} />)}
        </Toolbar>
      </PanelHead>
      <BarsTable />
      <TabGap />
      <TabStrip>
        {tabs.map(([t, w]) => <Tab key={t} $w={w} $active={t === 'Barras'}>{t}</Tab>)}
        <TabNav>
          <NavBtn>{I.first}</NavBtn><NavBtn>{I.prev}</NavBtn><NavBtn>{I.next}</NavBtn><NavBtn>{I.last}</NavBtn>
        </TabNav>
      </TabStrip>
      <ParamDialog />
      <FormulaDialog />
      <Annotations />
    </Page>
  );
}
